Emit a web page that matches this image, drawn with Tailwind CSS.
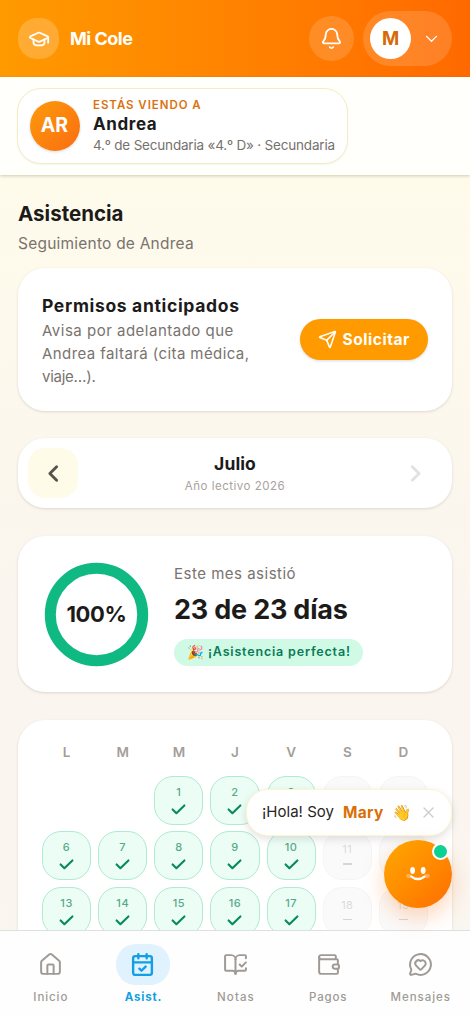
<!DOCTYPE html>
<html lang="es">
<head>
<meta charset="utf-8">
<title>Mi Cole</title>
<script src="https://cdn.jsdelivr.net/npm/@tailwindcss/browser@4"></script>
</head>
<body class="relative flex h-[1017px] w-[470px] flex-col overflow-hidden bg-linear-to-b from-[#fffbeb] from-[17%] via-[#faf5ee] via-[60%] to-[#faf6f0] font-['Inter','Noto_Color_Emoji',sans-serif] text-[#1c1b1a] whitespace-nowrap">

<header class="flex h-[77px] shrink-0 items-center bg-linear-to-r from-[#ff9a00] to-[#ff6900] px-[18px] text-white">
  <div class="flex size-[41px] items-center justify-center rounded-[19px] bg-white/20">
    <svg class="size-[22px]" viewBox="0 0 24 24" fill="none" stroke="currentColor" stroke-width="2" stroke-linecap="round" stroke-linejoin="round"><path d="M21.42 10.922a1 1 0 0 0-.019-1.838L12.83 5.18a2 2 0 0 0-1.66 0L2.6 9.08a1 1 0 0 0 0 1.832l8.57 3.908a2 2 0 0 0 1.66 0z"/><path d="M22 10v6"/><path d="M6 12.5V16a6 3 0 0 0 12 0v-3.5"/></svg>
  </div>
  <h1 class="ml-[11px] text-[18px] font-bold tracking-[-0.5px]">Mi Cole</h1>
  <div class="ml-auto flex size-[45px] items-center justify-center rounded-full bg-white/15">
    <svg class="size-[23px]" viewBox="0 0 24 24" fill="none" stroke="currentColor" stroke-width="1.9" stroke-linecap="round" stroke-linejoin="round"><path d="M10.268 21a2 2 0 0 0 3.464 0"/><path d="M3.262 15.326A1 1 0 0 0 4 17h16a1 1 0 0 0 .74-1.673C19.41 13.956 18 12.499 18 8A6 6 0 0 0 6 8c0 4.499-1.411 5.956-2.738 7.326"/></svg>
  </div>
  <div class="ml-[9px] flex h-[55px] w-[89px] items-center rounded-full bg-white/15 pl-[7px]">
    <div class="flex size-[41px] items-center justify-center rounded-full bg-white text-[18.5px] font-bold text-[#d66a05]">M</div>
    <svg class="ml-[12px] size-[17px]" viewBox="0 0 24 24" fill="none" stroke="currentColor" stroke-width="1.9" stroke-linecap="round" stroke-linejoin="round"><path d="m5 9 7 7 7-7"/></svg>
  </div>
</header>

<section class="h-[98px] shrink-0 bg-[#fffffb] px-[17px] pt-[10.5px] shadow-[0_1px_3px_rgba(90,80,20,0.28)]">
  <div class="flex h-[76px] w-[331px] items-center rounded-[24px] border-[1.5px] border-[#f4edc2] bg-white pl-[11.5px] shadow-[0_1px_2px_rgba(0,0,0,0.05)]">
    <div class="flex size-[50px] shrink-0 items-center justify-center rounded-full bg-linear-to-br from-[#fd9a0a] to-[#fa6c10] text-[19.5px] font-bold text-white shadow-[0_1px_3px_rgba(0,0,0,0.15)]">AR</div>
    <div class="ml-[13.5px] pt-px">
      <p class="text-[11.5px] leading-[17px] font-semibold tracking-[0.95px] text-[#d9730f]">ESTÁS VIENDO A</p>
      <p class="text-[17px] leading-[21px] font-bold tracking-[0.6px]">Andrea</p>
      <p class="text-[13.5px] leading-[20px] tracking-[-0.19px] text-[#77716d]">4.º de Secundaria «4.º D» · Secundaria</p>
    </div>
  </div>
</section>

<main class="flex min-h-0 flex-1 flex-col overflow-hidden px-[18px] pt-[25px]">
  <h2 class="text-[20.5px] leading-[28px] font-bold tracking-[0.01px]">Asistencia</h2>
  <p class="mt-[4px] text-[15.5px] leading-[24px] tracking-[0.22px] text-[#79736e]">Seguimiento de Andrea</p>

  <section class="mt-[12px] flex h-[143px] shrink-0 items-center rounded-[27px] bg-white px-[24px] shadow-[0_1px_3px_rgba(0,0,0,0.13)]">
    <div class="pt-px">
      <h3 class="text-[17.5px] leading-[25px] font-bold tracking-[0.67px]">Permisos anticipados</h3>
      <p class="mt-px text-[15px] leading-[23px] text-[#79736e]"><span class="tracking-[0.5px]">Avisa por adelantado que</span><br><span class="tracking-[0.41px]">Andrea faltará (cita médica,</span><br><span class="tracking-[-0.25px]">viaje…).</span></p>
    </div>
    <button class="ml-auto flex h-[41px] w-[128px] shrink-0 items-center rounded-full bg-[#ff9a00] pl-[18px] text-white shadow-[0_1px_3px_rgba(0,0,0,0.15)]">
      <svg class="size-[19px]" viewBox="0 0 24 24" fill="none" stroke="currentColor" stroke-width="2" stroke-linecap="round" stroke-linejoin="round"><path d="M14.536 21.686a.5.5 0 0 0 .937-.024l6.5-19a.496.496 0 0 0-.635-.635l-19 6.5a.5.5 0 0 0-.024.937l7.93 3.18a2 2 0 0 1 1.112 1.11z"/><path d="m21.854 2.147-10.94 10.939"/></svg>
      <span class="ml-[5.5px] text-[15.5px] font-bold tracking-[0.55px]">Solicitar</span>
    </button>
  </section>

  <section class="mt-[27px] flex h-[70px] shrink-0 items-center justify-between rounded-[27px] bg-white px-[10px] shadow-[0_1px_3px_rgba(0,0,0,0.13)]">
    <div class="flex size-[50px] items-center justify-center rounded-[17px] bg-[#fffbe9] text-[#57534e]">
      <svg class="size-[25px]" viewBox="0 0 24 24" fill="none" stroke="currentColor" stroke-width="2.8" stroke-linecap="round" stroke-linejoin="round"><path d="m15 18.5-6.5-6.5 6.5-6.5"/></svg>
    </div>
    <div class="pt-px text-center">
      <h3 class="text-[17.5px] leading-[25px] font-bold tracking-[0.1px]">Julio</h3>
      <p class="text-[11.5px] leading-[20px] tracking-[0.52px] text-[#a8a29d]">Año lectivo 2026</p>
    </div>
    <div class="flex size-[50px] items-center justify-center text-[#e2e1df]">
      <svg class="size-[25px]" viewBox="0 0 24 24" fill="none" stroke="currentColor" stroke-width="2.6" stroke-linecap="round" stroke-linejoin="round"><path d="m8 18.5 6.5-6.5-6.5-6.5"/></svg>
    </div>
  </section>

  <section class="mt-[28px] flex h-[156px] shrink-0 items-center rounded-[27px] bg-white pl-[26px] shadow-[0_1px_3px_rgba(0,0,0,0.13)]">
    <div class="grid size-[105px] place-items-center">
      <svg class="col-start-1 row-start-1 size-[105px]" viewBox="0 0 105 105" fill="none"><circle cx="52.5" cy="52.5" r="46.2" stroke="#10b981" stroke-width="11"/></svg>
      <span class="col-start-1 row-start-1 text-[22px] font-bold tracking-[-0.33px]">100%</span>
    </div>
    <div class="ml-[25px]">
      <p class="text-[15px] leading-[24px] tracking-[0.5px] text-[#79736e]">Este mes asistió</p>
      <p class="mt-[4px] text-[27px] leading-[40px] font-bold tracking-[-0.2px]">23 de 23 días</p>
      <div class="mt-[9px] mb-px flex h-[27px] w-[189px] items-center rounded-full bg-[#d0fae5] pl-[13px]">
        <span class="w-[21px] text-[13.5px]">🎉</span>
        <span class="text-[12.5px] font-semibold tracking-[0.82px] text-[#0a7a57]">¡Asistencia perfecta!</span>
      </div>
    </div>
  </section>

  <section class="mt-[28px] h-[420px] shrink-0 rounded-[27px] bg-white px-[24px] pt-[20px] shadow-[0_1px_3px_rgba(0,0,0,0.13)]">
    <div class="grid grid-cols-7 gap-x-[7px] text-center text-[13.5px] leading-[24px] font-semibold text-[#a39e99]">
      <span>L</span><span>M</span><span>M</span><span>J</span><span>V</span><span>S</span><span>D</span>
    </div>
    <div id="days" class="mt-[11.5px] grid grid-cols-7 gap-x-[7px] gap-y-[6.7px]"></div>
  </section>
</main>

<nav class="z-10 grid h-[87px] shrink-0 grid-cols-5 border-t border-[#dedfdf] bg-[#fefefe] pt-[13px] pr-[3px] pl-[4px] text-[11.5px] font-medium text-[#a09a95]">
  <a class="flex flex-col items-center">
    <span class="flex h-[41px] w-[54px] items-center justify-center"><svg class="size-[25px]" viewBox="0 0 24 24" fill="none" stroke="currentColor" stroke-width="1.9" stroke-linecap="round" stroke-linejoin="round"><path d="M15 21v-8a1 1 0 0 0-1-1h-4a1 1 0 0 0-1 1v8"/><path d="M3 10a2 2 0 0 1 .709-1.528l7-5.999a2 2 0 0 1 2.582 0l7 5.999A2 2 0 0 1 21 10v9a2 2 0 0 1-2 2H5a2 2 0 0 1-2-2z"/></svg></span>
    <span class="mt-[4px] pl-px leading-[17px] tracking-[0.91px]">Inicio</span>
  </a>
  <a class="flex flex-col items-center text-[#139fe2]">
    <span class="flex h-[41px] w-[54px] items-center justify-center rounded-[20px] bg-[#dff2fe]"><svg class="size-[25px]" viewBox="0 0 24 24" fill="none" stroke="currentColor" stroke-width="2.3" stroke-linecap="round" stroke-linejoin="round"><path d="M8 2v4M16 2v4"/><rect width="18" height="18" x="3" y="4" rx="2"/><path d="M3 10h18M9 16l2 2 4-4"/></svg></span>
    <span class="mt-[4px] pl-px leading-[17px] font-bold tracking-[0.8px]">Asist.</span>
  </a>
  <a class="flex flex-col items-center">
    <span class="flex h-[41px] w-[54px] items-center justify-center"><svg class="size-[25px]" viewBox="0 0 24 24" fill="none" stroke="currentColor" stroke-width="1.9" stroke-linecap="round" stroke-linejoin="round"><path d="M12 21V7"/><path d="m16 12 2 2 4-4"/><path d="M22 6V4a1 1 0 0 0-1-1h-5a4 4 0 0 0-4 4 4 4 0 0 0-4-4H3a1 1 0 0 0-1 1v13a1 1 0 0 0 1 1h6a3 3 0 0 1 3 3 3 3 0 0 1 3-3h6a1 1 0 0 0 1-1v-1.3"/></svg></span>
    <span class="mt-[4px] pl-px leading-[17px] tracking-[1.1px]">Notas</span>
  </a>
  <a class="flex flex-col items-center">
    <span class="flex h-[41px] w-[54px] items-center justify-center"><svg class="size-[25px]" viewBox="0 0 24 24" fill="none" stroke="currentColor" stroke-width="1.9" stroke-linecap="round" stroke-linejoin="round"><path d="M19 7V4a1 1 0 0 0-1-1H5a2 2 0 0 0 0 4h15a1 1 0 0 1 1 1v4h-3a2 2 0 0 0 0 4h3a1 1 0 0 0 1-1v-2a1 1 0 0 0-1-1"/><path d="M3 5v14a2 2 0 0 0 2 2h15a1 1 0 0 0 1-1v-4"/></svg></span>
    <span class="mt-[4px] leading-[17px] tracking-[0.8px]">Pagos</span>
  </a>
  <a class="flex flex-col items-center">
    <span class="flex h-[41px] w-[54px] items-center justify-center"><svg class="size-[25px]" viewBox="0 0 24 24" fill="none" stroke="currentColor" stroke-width="1.9" stroke-linecap="round" stroke-linejoin="round"><path d="M2.992 16.342a2 2 0 0 1 .094 1.167l-1.065 3.29a1 1 0 0 0 1.236 1.168l3.413-.998a2 2 0 0 1 1.099.092 10 10 0 1 0-4.777-4.719"/><path d="M7.828 13.07A3 3 0 0 1 12 8.764a3 3 0 0 1 5.004 2.224 3 3 0 0 1-.832 2.083l-3.447 3.62a1 1 0 0 1-1.45-.001z"/></svg></span>
    <span class="mt-[4px] leading-[17px] tracking-[0.95px]">Mensajes</span>
  </a>
</nav>

<!-- Floating assistant -->
<div class="absolute top-[789px] left-[246px] z-20 flex h-[47px] w-[206px] items-center rounded-[22px] border border-[#fcf6cf] bg-white pl-[15px] text-[15px] text-[#292524] shadow-[0_3px_8px_rgba(0,0,0,0.12)]">
  <span class="w-[81px] tracking-[0.02px]">¡Hola! Soy</span>
  <b class="w-[49px] text-[15.5px] font-bold tracking-[0.3px] text-[#d97006]">Mary</b>
  <span class="w-[29.5px] text-[15.5px]">👋</span>
  <svg class="size-[13px]" viewBox="0 0 13 13" fill="none" stroke="#cfccc9" stroke-width="1.4" stroke-linecap="round"><path d="m2 2 9 9M11 2l-9 9"/></svg>
</div>
<div class="absolute top-[840px] left-[384px] z-20 flex size-[68px] items-center justify-center rounded-full bg-linear-to-br from-[#ffa800] to-[#ff6c00] shadow-[0_9px_22px_rgba(255,105,0,0.28)]">
  <svg class="size-[68px]" viewBox="0 0 68 68" fill="none"><ellipse cx="28.6" cy="30.5" rx="2.4" ry="3.4" fill="#fff"/><ellipse cx="39.2" cy="30.5" rx="2.4" ry="3.4" fill="#fff"/><ellipse cx="24.6" cy="36" rx="2.6" ry="2.2" fill="#ffc58a" fill-opacity=".6"/><ellipse cx="43.2" cy="36" rx="2.6" ry="2.2" fill="#ffc58a" fill-opacity=".6"/><path d="M27.4 36.6q6.5 5 13 0" stroke="#fff" stroke-width="2.4" stroke-linecap="round"/></svg>
  <span class="absolute top-[3px] right-[3px] size-[17px] rounded-full border-[2px] border-white bg-[#0bd192]"></span>
</div>

<script>
  const days = document.getElementById('days');
  const blank = '<div></div>';
  const school = n => `<div class="flex h-[49px] flex-col items-center rounded-[19px] border border-[#aeebd0] bg-[#ecfdf5] pt-[8px] text-[11px] leading-[14px] font-medium tracking-[0.5px] text-[#58a98a]">${n}<svg class="mt-[2px] size-[17px]" viewBox="0 0 17 17" fill="none" stroke="#078a5c" stroke-width="2.1" stroke-linecap="round" stroke-linejoin="round"><path d="m2.6 8.4 3.8 3.8 8-7.8"/></svg></div>`;
  const weekend = n => `<div class="flex h-[49px] flex-col items-center rounded-[19px] border border-[#f5f5f4] bg-[#fafafa] pt-[9px] text-[11px] leading-[16px] tracking-[0.5px] text-[#dddbd9]">${n}<i class="mt-[6px] h-[1.5px] w-[9px] bg-[#d8d6d4]"></i></div>`;
  let html = blank + blank;
  for (let d = 1; d <= 19; d++) html += (d + 1) % 7 > 4 ? weekend(d) : school(d);
  days.innerHTML = html;
</script>
</body>
</html>
